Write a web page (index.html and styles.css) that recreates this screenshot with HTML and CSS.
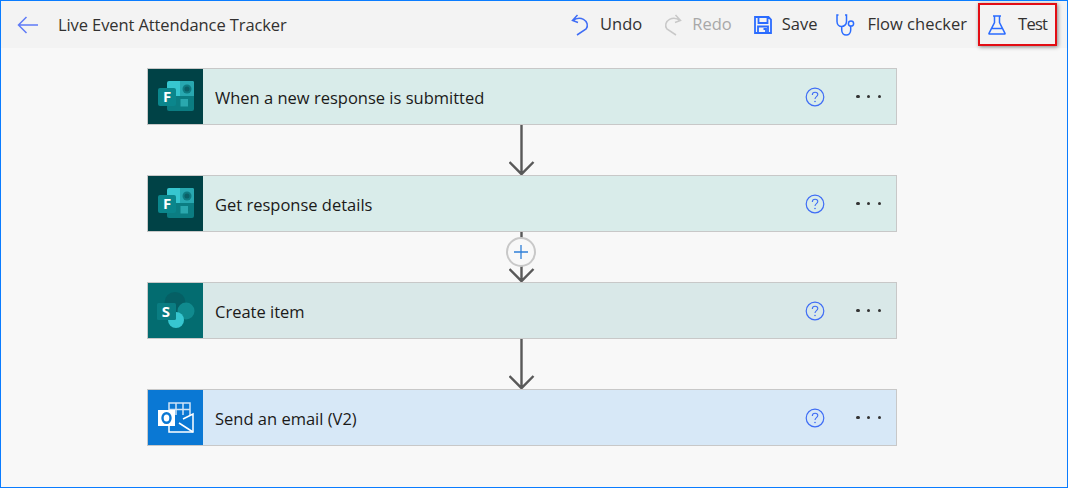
FILE: index.html
```html
<!DOCTYPE html>
<html lang="en">
<head>
<meta charset="utf-8">
<title>Live Event Attendance Tracker</title>
<link rel="stylesheet" href="styles.css">
</head>
<body>
<div class="app">
  <header class="topbar">
    <svg class="back" viewBox="0 0 22 18" width="22" height="18"><path d="M21 9H1.500M9.500 1 1.500 9l8 8" fill="none" stroke="#5f7bf7" stroke-width="1.500"/></svg>
    <div class="title">Live Event Attendance Tracker</div>
    <nav class="tools">
      <div class="tool t-undo">
        <svg viewBox="0 0 18 22" width="18" height="22"><path d="M6.500 1 1.500 6.500l5.500 2M1.800 6.600C5 4.200 9 3.600 12.500 5.400c3.800 2 5 6.400 2.600 9.600L6 21" fill="none" stroke="#3f6df5" stroke-width="1.500"/></svg>
        <span>Undo</span>
      </div>
      <div class="tool t-redo muted">
        <svg viewBox="0 0 18 22" width="18" height="22"><path d="M11.500 1l5 5.500-5.500 2M16.200 6.600C13 4.200 9 3.600 5.500 5.400c-3.800 2-5 6.400-2.600 9.600L12 21" fill="none" stroke="#c8c8c8" stroke-width="1.500"/></svg>
        <span>Redo</span>
      </div>
      <div class="tool t-save">
        <svg viewBox="0 0 18 18" width="18" height="18"><path d="M1 1h13.500L17 3.500V17H1zM4.500 1v6h9V1M4 17v-6.500h10V17M9.500 13h2.500v4" fill="none" stroke="#2b6cff" stroke-width="1.800"/></svg>
        <span>Save</span>
      </div>
      <div class="tool t-check">
        <svg viewBox="0 0 21 22" width="21" height="22"><path d="M2.500 1H1v6.500c0 3 2.300 5 4.700 5s4.800-2 4.800-5V1H9M5.700 12.500V16c0 3 2 5 4.500 5s4.500-2 4.500-5v-4" fill="none" stroke="#2b6cff" stroke-width="1.500"/><circle cx="15" cy="9.500" r="2.600" fill="none" stroke="#2b6cff" stroke-width="1.500"/></svg>
        <span>Flow checker</span>
      </div>
      <div class="tool t-test">
        <svg viewBox="0 0 18 20" width="18" height="20"><path d="M5 1h8M6.500 1v6.500L1 18.300c-.2.400 0 .7.500.7h15c.5 0 .7-.3.500-.7L11.500 7.500V1M3.800 13.500h10.400" fill="none" stroke="#2b6cff" stroke-width="1.500"/></svg>
        <span>Test</span>
      </div>
    </nav>
  </header>

  <main class="canvas">
    <div class="flow">
      <div class="card forms">
        <div class="tile">
          <svg viewBox="0 0 36 32" width="36" height="32">
            <path d="M9 2a2 2 0 0 1 2-2h23a2 2 0 0 1 2 2v13H9z" fill="#37c6d0"/>
            <path d="M9 15h27v13a2 2 0 0 1-2 2H11a2 2 0 0 1-2-2z" fill="#0b7d82"/>
            <path d="M22 0h12a2 2 0 0 1 2 2v13H22z" fill="#28a8b0"/>
            <circle cx="29" cy="8" r="4.500" fill="#0f7a80"/>
            <circle cx="29" cy="8" r="2.500" fill="#0b5f66"/>
            <rect x="22.500" y="18" width="7.500" height="7.500" fill="#2aa8ae"/>
            <rect y="7" width="18" height="18" rx="2" fill="#0b868c"/>
          </svg>
          <span class="letter">F</span>
        </div>
        <div class="name">When a new response is submitted</div>
        <svg class="help" viewBox="0 0 20 20" width="20" height="20"><circle cx="10" cy="10" r="8.800" fill="none" stroke="#3f6df5" stroke-width="1.200"/><path d="M7.300 8c0-1.700 1.200-2.800 2.800-2.800s2.700 1 2.700 2.300c0 2.100-2.800 2.200-2.800 4.500" fill="none" stroke="#3f6df5" stroke-width="1.100"/><circle cx="10" cy="14.500" r=".8" fill="#3f6df5"/></svg>
        <div class="more"><i></i><i></i><i></i></div>
      </div>

      <div class="link">
        <svg viewBox="0 0 26 50" width="26" height="50"><path d="M12.500 0v49M.5 37 12.500 49.200 24.500 37" fill="none" stroke="#595959" stroke-width="2.400"/></svg>
      </div>

      <div class="card forms">
        <div class="tile">
          <svg viewBox="0 0 36 32" width="36" height="32">
            <path d="M9 2a2 2 0 0 1 2-2h23a2 2 0 0 1 2 2v13H9z" fill="#37c6d0"/>
            <path d="M9 15h27v13a2 2 0 0 1-2 2H11a2 2 0 0 1-2-2z" fill="#0b7d82"/>
            <path d="M22 0h12a2 2 0 0 1 2 2v13H22z" fill="#28a8b0"/>
            <circle cx="29" cy="8" r="4.500" fill="#0f7a80"/>
            <circle cx="29" cy="8" r="2.500" fill="#0b5f66"/>
            <rect x="22.500" y="18" width="7.500" height="7.500" fill="#2aa8ae"/>
            <rect y="7" width="18" height="18" rx="2" fill="#0b868c"/>
          </svg>
          <span class="letter">F</span>
        </div>
        <div class="name">Get response details</div>
        <svg class="help" viewBox="0 0 20 20" width="20" height="20"><circle cx="10" cy="10" r="8.800" fill="none" stroke="#3f6df5" stroke-width="1.200"/><path d="M7.300 8c0-1.700 1.200-2.800 2.800-2.800s2.700 1 2.700 2.300c0 2.100-2.800 2.200-2.800 4.500" fill="none" stroke="#3f6df5" stroke-width="1.100"/><circle cx="10" cy="14.500" r=".8" fill="#3f6df5"/></svg>
        <div class="more"><i></i><i></i><i></i></div>
      </div>

      <div class="link">
        <svg viewBox="0 0 26 50" width="26" height="50"><path d="M12.500 0v49M.5 37 12.500 49.200 24.500 37" fill="none" stroke="#595959" stroke-width="2.400"/></svg>
        <div class="plus">
          <svg viewBox="0 0 14 14" width="14" height="14"><path d="M7 0v14M0 7h14" stroke="#2f7fd8" stroke-width="1.300" fill="none"/></svg>
        </div>
      </div>

      <div class="card sharepoint">
        <div class="tile">
          <svg viewBox="0 0 38 37" width="38" height="37">
            <circle cx="18" cy="10.500" r="10.500" fill="#055f64"/>
            <circle cx="29" cy="19" r="8.500" fill="#108a8e"/>
            <circle cx="19" cy="28" r="8" fill="#37c6d0"/>
            <rect y="11" width="19" height="17" rx="1.500" fill="#0a7d82"/>
          </svg>
          <span class="letter s">S</span>
        </div>
        <div class="name">Create item</div>
        <svg class="help" viewBox="0 0 20 20" width="20" height="20"><circle cx="10" cy="10" r="8.800" fill="none" stroke="#3f6df5" stroke-width="1.200"/><path d="M7.300 8c0-1.700 1.200-2.800 2.800-2.800s2.700 1 2.700 2.300c0 2.100-2.800 2.200-2.800 4.500" fill="none" stroke="#3f6df5" stroke-width="1.100"/><circle cx="10" cy="14.500" r=".8" fill="#3f6df5"/></svg>
        <div class="more"><i></i><i></i><i></i></div>
      </div>

      <div class="link">
        <svg viewBox="0 0 26 50" width="26" height="50"><path d="M12.500 0v49M.5 37 12.500 49.200 24.500 37" fill="none" stroke="#595959" stroke-width="2.400"/></svg>
      </div>

      <div class="card outlook">
        <div class="tile">
          <svg viewBox="0 0 36 32" width="36" height="32">
            <path d="M11 8V1h21v13M18 1v12M25 1v12M11 7.500h21" fill="none" stroke="#cfe4f7" stroke-width="1.500"/>
            <path d="M25 17l10-5v18H11v-6" fill="none" stroke="#fff" stroke-width="1.500"/>
            <path d="M21 21l14 9" fill="none" stroke="#fff" stroke-width="1.500"/>
            <rect y="8" width="17" height="16" fill="#fff"/>
            <ellipse cx="8.500" cy="16" rx="4" ry="4.800" fill="none" stroke="#0a78d4" stroke-width="2.400"/>
          </svg>
        </div>
        <div class="name">Send an email (V2)</div>
        <svg class="help" viewBox="0 0 20 20" width="20" height="20"><circle cx="10" cy="10" r="8.800" fill="none" stroke="#3f6df5" stroke-width="1.200"/><path d="M7.300 8c0-1.700 1.200-2.800 2.800-2.800s2.700 1 2.700 2.300c0 2.100-2.800 2.200-2.800 4.500" fill="none" stroke="#3f6df5" stroke-width="1.100"/><circle cx="10" cy="14.500" r=".8" fill="#3f6df5"/></svg>
        <div class="more"><i></i><i></i><i></i></div>
      </div>
    </div>
  </main>
</div>
</body>
</html>
```
FILE: styles.css
```css
* { box-sizing: border-box; }
html, body { margin: 0; height: 100%; }
body { font-family: "Open Sans", "Noto Sans", sans-serif; color: #323130; }
.app {
  width: 1068px;
  height: 488px;
  border: 1px solid #0a7cff;
  background: #f8f8f8;
  display: flex;
  flex-direction: column;
  overflow: hidden;
}
.topbar {
  height: 47px;
  flex: none;
  background: #f3f3f3;
  display: flex;
  align-items: center;
  padding-left: 16px;
  font-size: 16.500px;
}
.back { flex: none; margin-right: 19px; }
.title { letter-spacing: -.1px; white-space: nowrap; }
.tools { margin-left: auto; display: flex; align-items: center; height: 100%; }
.tool { display: flex; align-items: center; gap: 11px; white-space: nowrap; }
.tool span { position: relative; top: -1px; }
.muted { color: #a8a8a8; }
.t-redo { margin-left: 22px; gap: 10px; }
.t-save { margin-left: 22px; gap: 10px; }
.t-check { margin-left: 19px; gap: 10px; }
.t-test {
  margin-left: 11px;
  margin-right: 10px;
  height: 43px;
  width: 79px;
  padding-left: 8px;
  gap: 12px;
  border: 2px solid #e30d14;
  box-shadow: 1px 1px 4px rgba(0, 0, 0, .45);
  letter-spacing: -.7px;
}
.canvas {
  flex: 1;
  padding: 20px 0 0 146px;
}
.flow { width: 750px; display: flex; flex-direction: column; }
.card {
  height: 57px;
  flex: none;
  display: flex;
  align-items: center;
  border: 1px solid #c8c8c8;
  font-size: 16.500px;
  color: #1b1a19;
}
.forms { background: #d9ecea; }
.sharepoint { background: #d9e8e8; }
.outlook { background: #d7e8f7; }
.tile {
  width: 55px;
  height: 100%;
  flex: none;
  display: flex;
  align-items: center;
  justify-content: center;
  position: relative;
}
.forms .tile { background: #004246; }
.sharepoint .tile { background: #036c70; }
.outlook .tile { background: #0a78d4; }
.letter {
  position: absolute;
  left: 10px;
  top: 18px;
  width: 18px;
  height: 18px;
  line-height: 18px;
  text-align: center;
  color: #fff;
  font-size: 15px;
  font-weight: 700;
}
.letter.s { left: 9px; top: 19px; }
.name { margin-left: 12px; padding-top: 1px; flex: 1; white-space: nowrap; }
.help { flex: none; margin-right: 31px; }
.more { flex: none; display: flex; gap: 7.200px; margin-right: 15px; }
.more i { width: 3.500px; height: 3.500px; border-radius: 50%; background: #333; display: block; }
.link {
  height: 50px;
  flex: none;
  display: flex;
  justify-content: center;
  position: relative;
}
.plus {
  position: absolute;
  left: 359px;
  top: 5px;
  width: 30px;
  height: 30px;
  border-radius: 50%;
  background: #f8f8f8;
  border: 2px solid #c8c8c8;
  display: flex;
  align-items: center;
  justify-content: center;
}
```
